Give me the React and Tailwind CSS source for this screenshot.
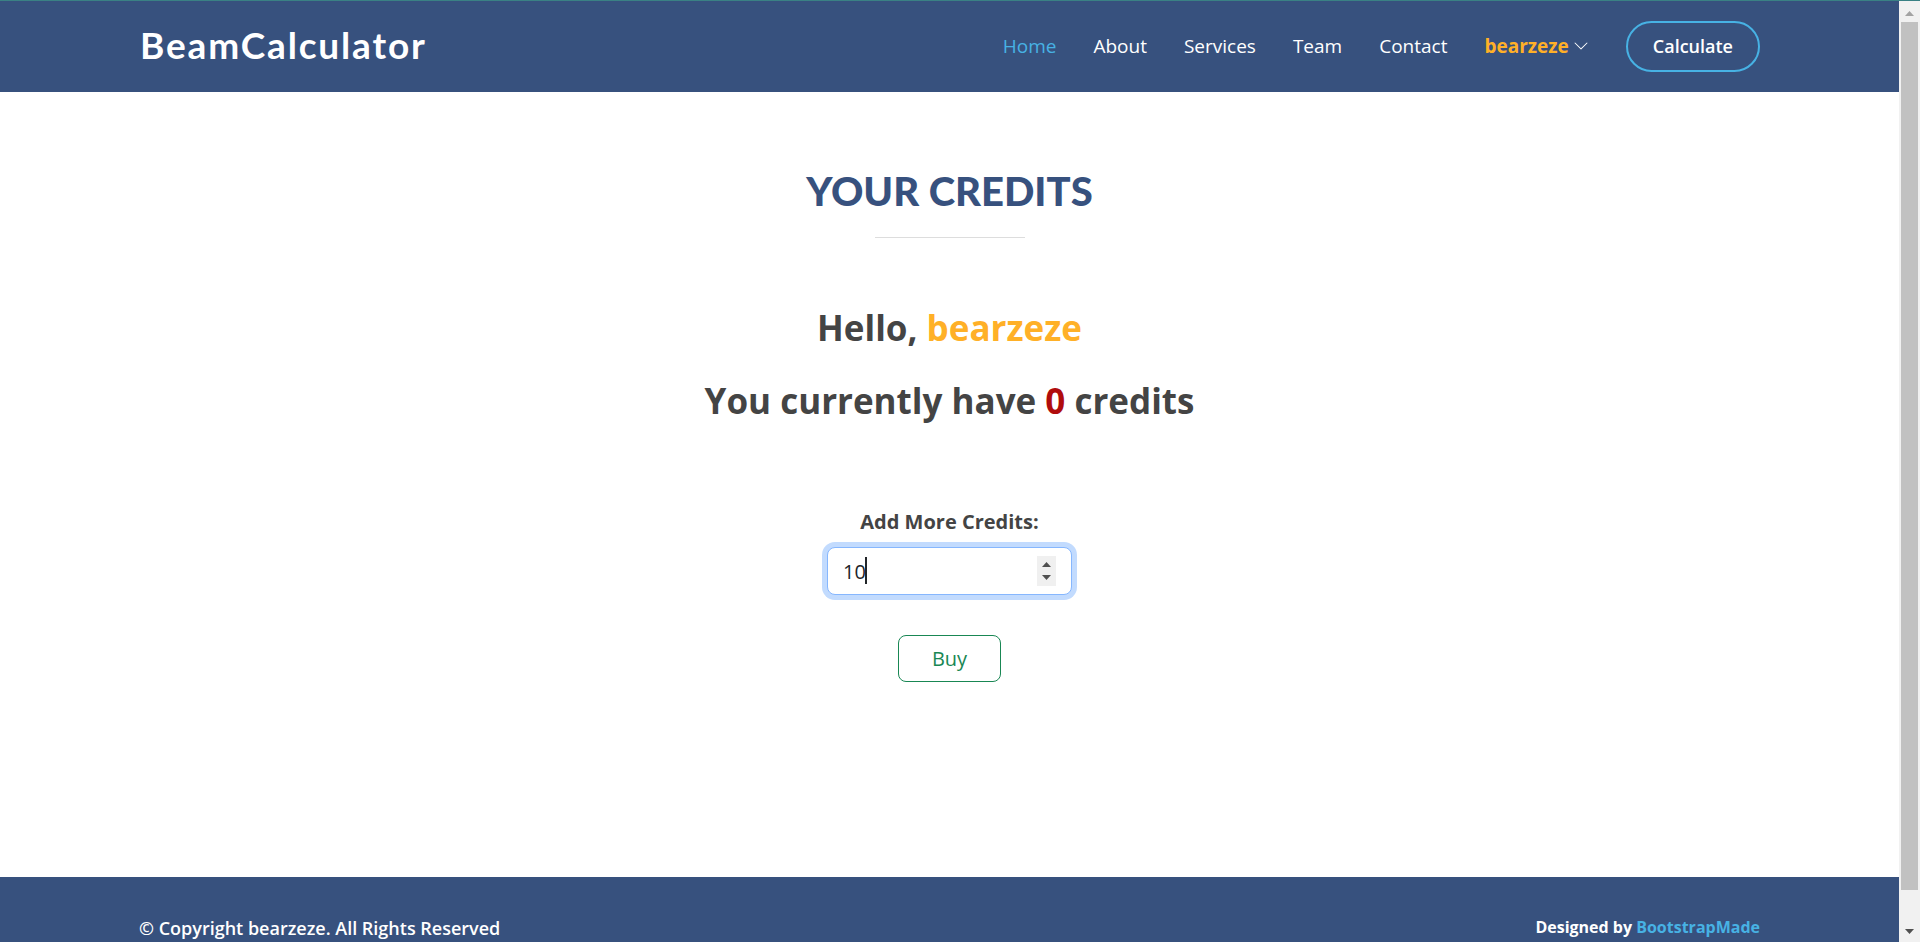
import { useState } from "react";

const links = ["Home", "About", "Services", "Team", "Contact"];

function Header() {
  return (
    <header className="bg-[#37517e] px-[139px] pt-5 pb-5">
      <div className="flex h-[51px] items-center justify-between">
        <a
          href="#home"
          className="pb-1 pl-px font-[Lato,sans-serif] text-[37px] leading-[44px] font-bold tracking-wider text-white"
        >
          BeamCalculator
        </a>
        <nav className="flex items-center gap-[37px] text-[19px] leading-6 text-white">
          {links.map((name, i) => (
            <a key={name} href={"#" + name.toLowerCase()} className={i === 0 ? "pb-0.5 text-[#47b2e4]" : "pb-0.5"}>
              {name}
            </a>
          ))}
          <a href="#account" className="flex items-center gap-1 pb-0.5">
            <span className="font-bold text-[#ffb027]">bearzeze</span>
            <svg className="h-4 w-4" viewBox="0 0 16 16" fill="currentColor" aria-hidden="true">
              <path
                fillRule="evenodd"
                d="M1.646 4.646a.5.5 0 0 1 .708 0L8 10.293l5.646-5.647a.5.5 0 0 1 .708.708l-6 6a.5.5 0 0 1-.708 0l-6-6a.5.5 0 0 1 0-.708z"
              />
            </svg>
          </a>
          <a
            href="#calculate"
            className="rounded-full border-2 border-[#47b2e4] px-[25px] py-[12px] text-[18px] leading-[23px] font-semibold"
          >
            Calculate
          </a>
        </nav>
      </div>
    </header>
  );
}

function CreditsForm() {
  const [amount, setAmount] = useState(10);
  return (
    <form className="flex flex-col items-center" onSubmit={(e) => e.preventDefault()}>
      <label htmlFor="amount" className="text-[20px] leading-[30px] font-bold">
        Add More Credits:
      </label>
      <div className="relative mt-2.5 flex w-[245px] items-center rounded-lg border border-[#86b7fe] bg-white pr-[15px] pl-[15px] ring-[5px] ring-[#c2dbfe]">
        <input
          id="amount"
          type="number"
          value={amount}
          onChange={(e) => setAmount(Number(e.target.value))}
          className="h-[46px] w-full min-w-0 flex-1 [appearance:textfield] bg-transparent text-[20px] text-[#212529] outline-none"
        />
        <span className="absolute top-[9px] left-[37px] h-[27px] w-[2px] bg-[#212529]" />
        <div className="flex h-[30px] w-[19px] flex-col bg-[#f0f0f0] text-[#505050]">
          <button
            type="button"
            aria-label="Increase"
            onClick={() => setAmount(amount + 1)}
            className="flex flex-1 items-end justify-center pb-1"
          >
            <svg className="h-[5px] w-[9px]" viewBox="0 0 9 5" fill="currentColor">
              <path d="M0 5 4.5 0 9 5z" />
            </svg>
          </button>
          <button
            type="button"
            aria-label="Decrease"
            onClick={() => setAmount(amount - 1)}
            className="flex flex-1 items-start justify-center pt-1"
          >
            <svg className="h-[5px] w-[9px]" viewBox="0 0 9 5" fill="currentColor">
              <path d="M0 0h9L4.5 5z" />
            </svg>
          </button>
        </div>
      </div>
      <button
        type="submit"
        className="mt-10 rounded-lg border border-[#198754] px-[33px] py-2 text-[20px] leading-[29px] text-[#198754]"
      >
        Buy
      </button>
    </form>
  );
}

function Scrollbar() {
  return (
    <div className="flex w-[21px] shrink-0 flex-col items-center bg-[#f1f1f1]" aria-hidden="true">
      <div className="flex h-[21px] items-center justify-center pt-1">
        <svg className="h-[5px] w-[9px]" viewBox="0 0 9 5" fill="#a3a3a3">
          <path d="M0 5 4.5 0 9 5z" />
        </svg>
      </div>
      <div className="w-[17px] grow-[868] bg-[#c1c1c1]" />
      <div className="grow-[31]" />
      <div className="flex h-[21px] items-center justify-center">
        <svg className="h-[5px] w-[9px]" viewBox="0 0 9 5" fill="#505050">
          <path d="M0 0h9L4.5 5z" />
        </svg>
      </div>
    </div>
  );
}

export default function App() {
  return (
    <div className="flex h-screen flex-col overflow-hidden bg-white font-['Open_Sans',sans-serif] text-[#444444]">
      <div className="h-px shrink-0 bg-[#3a8184]" />
      <div className="flex min-h-0 flex-1">
        <div className="min-w-0 flex-1 overflow-hidden">
          <Header />
          <main className="flex flex-col items-center pt-[75px] pb-[195px] text-center">
            <h1 className="font-[Lato,sans-serif] text-[40px] leading-[48px] font-black text-[#37517e] uppercase">
              Your Credits
            </h1>
            <div className="mt-[22px] h-px w-[150px] bg-[#dddddd]" />
            <h2 className="mt-[69px] text-[35px] leading-[42px] font-bold">
              Hello, <span className="text-[#ffb027]">bearzeze</span>
            </h2>
            <h2 className="mt-[31px] mb-[85px] text-[35px] leading-[42px] font-bold">
              You currently have <span className="text-[#b00c0c]">0</span> credits
            </h2>
            <CreditsForm />
          </main>
          <footer className="bg-[#37517e] px-[139px] py-[38px] text-white">
            <div className="flex items-start justify-between">
              <p className="text-[18px] leading-[27px] font-semibold">© Copyright bearzeze. All Rights Reserved</p>
              <p className="text-[16px] leading-6 font-bold">
                Designed by{" "}
                <a href="#bootstrapmade" className="text-[#47b2e4]">
                  BootstrapMade
                </a>
              </p>
            </div>
          </footer>
        </div>
        <Scrollbar />
      </div>
    </div>
  );
}
